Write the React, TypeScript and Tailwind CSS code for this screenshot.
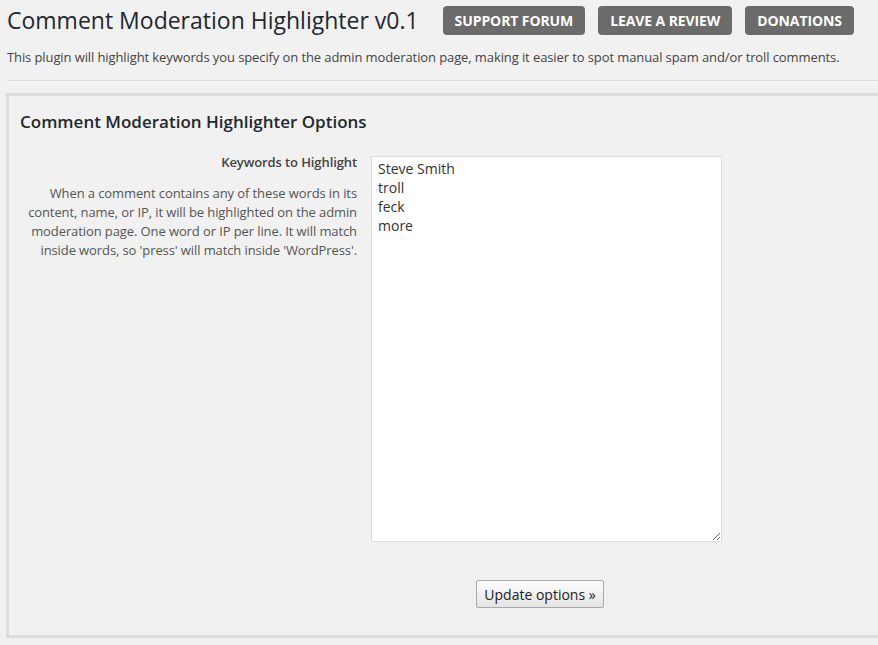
import { useState } from "react";

const links = ["SUPPORT FORUM", "LEAVE A REVIEW", "DONATIONS"];

export default function App() {
  const [keywords, setKeywords] = useState("Steve Smith\ntroll\nfeck\nmore");

  return (
    <div className="h-[645px] w-[878px] overflow-hidden bg-[#f1f1f1] font-['Open_Sans',sans-serif] text-[13px] text-[#444]">
      <div className="flex items-center pl-[7px] pt-[6px]">
        <h1 className="text-[23px] leading-[29px] font-normal text-[#23282d]">
          Comment Moderation Highlighter v0.1
        </h1>
        <div className="ml-[24px] flex gap-[13px]">
          {links.map((label) => (
            <a
              key={label}
              href="#"
              className="flex h-[29px] items-center rounded-[4px] bg-[#6b6b6b] px-[12px] text-[14px] font-bold tracking-[-0.1px] text-white"
            >
              {label}
            </a>
          ))}
        </div>
      </div>

      <p className="mt-[13px] pl-[7px] leading-[19px] tracking-[-0.1px]">
        This plugin will highlight keywords you specify on the admin moderation page, making it easier to spot
        manual spam and/or troll comments.
      </p>

      <div className="mt-[13px] ml-[6px] border-t border-b border-t-[#dcdcdc] border-b-[#fafafa]" />

      <div className="mt-[11px] ml-[6px] border-[3px] border-r-0 border-[#dcdcdc] pb-[27px] pt-[14px]">
        <h2 className="pl-[11px] text-[17px] leading-[24px] font-semibold text-[#23282d]">
          Comment Moderation Highlighter Options
        </h2>

        <div className="mt-[19px] flex items-start gap-[14px]">
          <div className="w-[348px] text-right tracking-[-0.1px]">
            <div className="font-semibold leading-[19px] text-[#444]">Keywords to Highlight</div>
            <p className="mt-[12px] pl-[8px] leading-[19px] text-[#555]">
              When a comment contains any of these words in its content, name, or IP, it will be highlighted on the
              admin moderation page. One word or IP per line. It will match inside words, so 'press' will match
              inside 'WordPress'.
            </p>
          </div>
          <textarea
            value={keywords}
            onChange={(e) => setKeywords(e.target.value)}
            className="mt-[3px] h-[386px] w-[351px] border border-[#dddddd] bg-white px-[6px] pt-[2px] text-[14px] leading-[19px] text-[#333] outline-none"
          />
        </div>

        <div className="mt-[38px] pl-[467px]">
          <button
            type="button"
            className="h-[28px] w-[128px] rounded-[2px] border border-[#a9a9a9] bg-gradient-to-b from-[#fdfdfd] to-[#e4e4e4] text-[14px] text-[#222]"
          >
            Update options »
          </button>
        </div>
      </div>
    </div>
  );
}
